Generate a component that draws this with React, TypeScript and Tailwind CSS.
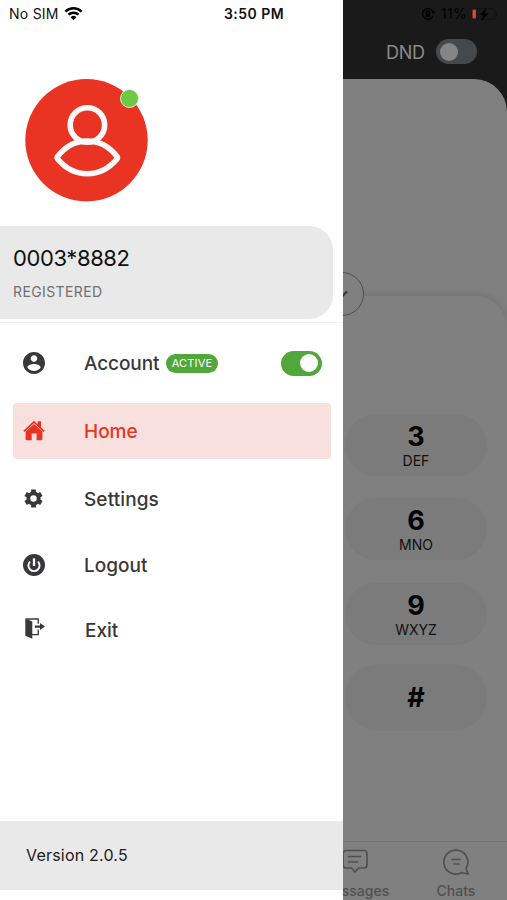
import type { ReactNode } from "react";

type MenuItem = {
  label: string;
  icon: ReactNode;
  rowClass: string;
  labelClass: string;
};

function WifiIcon() {
  return (
    <svg viewBox="0 0 20 16" className="ml-[5px] h-[15px] w-[19px]" fill="none" stroke="#000" strokeWidth="2.7">
      <path d="M1.4 5.9a12.2 12.2 0 0 1 17.2 0" />
      <path d="M4.6 9.3a7.7 7.7 0 0 1 10.8 0" />
      <path d="M10 15.2 6.9 11.9a4.4 4.4 0 0 1 6.2 0z" fill="#000" stroke="none" />
    </svg>
  );
}

function AvatarIcon() {
  return (
    <svg viewBox="0 0 123 123" className="size-[123px]" fill="none" stroke="#fafafa" strokeWidth="5.6">
      <circle cx="61.5" cy="61.2" r="61.2" fill="#e93323" stroke="none" />
      <circle cx="62.4" cy="46" r="17.2" />
      <path d="M32.6 77.4C40 68 50.5 62 62.3 62S84.5 68 92 77.4Q92.9 78.7 92 80C83.5 90 73.3 94.8 62.3 94.8S41 90 32.6 80Q31.7 78.7 32.6 77.4Z" strokeLinejoin="round" />
    </svg>
  );
}

function AccountIcon() {
  return (
    <svg viewBox="2 2 20 20" className="size-[22px]" fill="#38383a">
      <path d="M12 2C6.48 2 2 6.48 2 12s4.48 10 10 10 10-4.48 10-10S17.52 2 12 2zm0 3c1.66 0 3 1.34 3 3s-1.34 3-3 3-3-1.34-3-3 1.34-3 3-3zm0 14.2c-2.5 0-4.71-1.28-6-3.22.03-1.99 4-3.08 6-3.08 1.99 0 5.97 1.09 6 3.08-1.29 1.94-3.5 3.22-6 3.22z" />
    </svg>
  );
}

function HomeIcon() {
  return (
    <svg viewBox="0 0 22 21" className="mb-[2px] h-[21px] w-[22px]" fill="#e93323">
      <path d="M11 4 19.4 11.6V18.9a1.3 1.3 0 0 1-1.3 1.3h-4.5v-6.6H8.7v6.6H3.9A1.3 1.3 0 0 1 2.6 18.9v-7.3z" />
      <path d="M.9 11.3 11 1.9l10.1 9.4" fill="none" stroke="#e93323" strokeWidth="1.8" />
      <path d="M14.6 1.2h3.4v6.7l-3.4-3.1z" />
    </svg>
  );
}

function SettingsIcon() {
  return (
    <svg viewBox="0 0 20 20" className="mr-px size-[19px]" fill="none" stroke="#38383a">
      <circle cx="10" cy="10" r="5.4" strokeWidth="4" />
      <path
        d="M10 .4v3M10 16.6v3M1.69 5.2l2.6 1.5M15.71 13.3l2.6 1.5M1.69 14.8l2.6-1.5M15.71 6.7l2.6-1.5"
        strokeWidth="5"
      />
    </svg>
  );
}

function LogoutIcon() {
  return (
    <svg viewBox="0 0 22 22" className="size-[22px]" fill="none" stroke="#fff" strokeWidth="1.9">
      <circle cx="11" cy="11" r="11" fill="#38383a" stroke="none" />
      <path d="M7 7.6a5.6 5.6 0 1 0 8 0" />
      <path d="M11 4.4v7.6" strokeWidth="2.3" />
    </svg>
  );
}

function ExitIcon() {
  return (
    <svg viewBox="0 0 22 21" className="h-[21px] w-[22px]" fill="#38383a">
      <path d="M2.3.6 9.3 3.6v17.2L2.3 17.8z" />
      <path d="M2.9 1h12.3v4.7M15.2 11.4v5.2H9" fill="none" stroke="#38383a" strokeWidth="1.3" />
      <path d="M11.8 7.5h5.2V5.1l5 3.5-5 3.5V9.7h-5.2z" />
    </svg>
  );
}

const menu: MenuItem[] = [
  {
    label: "Home",
    icon: <HomeIcon />,
    rowClass: "mt-[11px] h-[56px] rounded-[4px] bg-[#f8e0df] text-[#e93323]",
    labelClass: "pt-[2px]",
  },
  { label: "Settings", icon: <SettingsIcon />, rowClass: "mt-[12px] h-[55px]", labelClass: "tracking-[0.1px] pt-[3px]" },
  { label: "Logout", icon: <LogoutIcon />, rowClass: "mt-[11px] h-[55px]", labelClass: "pt-[3px]" },
  { label: "Exit", icon: <ExitIcon />, rowClass: "mt-[9px] h-[55px]", labelClass: "pl-px pt-[5px]" },
];

const keys = [
  { digit: "3", letters: "DEF", className: "h-[62px]" },
  { digit: "6", letters: "MNO", className: "mt-[22px] h-[62px]" },
  { digit: "9", letters: "WXYZ", className: "mt-[23px] h-[62px]" },
  { digit: "#", letters: "", className: "mt-[19px] h-[67px] pb-[2px]" },
];

function Drawer() {
  return (
    <aside className="flex h-full w-[343px] shrink-0 flex-col bg-white text-[#38383a]">
      <div className="flex h-[26px] items-center pl-[9px] text-[#111]">
        <span className="w-[50px] whitespace-nowrap text-[14px] tracking-[0.25px]">No SIM</span>
        <WifiIcon />
        <span className="ml-[141px] whitespace-nowrap text-[14px] font-semibold tracking-[0.45px]">3:50 PM</span>
      </div>

      <div className="relative ml-[25px] mt-[53px] size-[123px]">
        <AvatarIcon />
        <span className="absolute left-[95px] top-[10px] size-[19px] rounded-full border border-[#e5f0d8] bg-[#6cc944]" />
      </div>

      <div className="mr-[10px] mt-[24px] flex h-[93px] flex-col rounded-r-[24px] bg-[#e9e9e9] pl-[13px] pt-[18px]">
        <span className="text-[22px] leading-[28px] tracking-[-0.4px] text-[#111]">0003*8882</span>
        <span className="mt-[9px] text-[14px] leading-[22px] tracking-[0.4px] text-[#707070]">REGISTERED</span>
      </div>
      <div className="mt-[3px] h-px bg-[#f2f2f2]" />

      <nav className="flex flex-col pl-[13px] pr-[12px] text-[19px] font-medium">
        <div className="mt-[11px] flex h-[58px] items-center">
          <span className="flex w-[71px] pl-[10px]">
            <AccountIcon />
          </span>
          <span className="w-[75px] whitespace-nowrap pt-[2px] tracking-[-0.1px]">Account</span>
          <span className="ml-[7px] flex h-[19px] w-[52px] items-center justify-center rounded-full bg-[#51a739] text-[11px] font-normal tracking-[0.2px] text-white">
            ACTIVE
          </span>
          <span className="ml-auto mr-[9px] flex h-[25px] w-[41px] items-center justify-end rounded-full bg-[#51a739] pr-[4px]">
            <span className="size-[18px] rounded-full bg-white" />
          </span>
        </div>
        {menu.map((item) => (
          <div key={item.label} className={`flex items-center ${item.rowClass}`}>
            <span className="flex w-[71px] shrink-0">
              <span className="flex w-[42px] justify-center">{item.icon}</span>
            </span>
            <span className={item.labelClass}>{item.label}</span>
          </div>
        ))}
      </nav>

      <footer className="mb-[10px] mt-auto flex h-[69px] items-center bg-[#e9e9e9] pb-[2px] pl-[26px] text-[16px] tracking-[0.2px] text-[#202020]">
        Version 2.0.5
      </footer>
    </aside>
  );
}

function Dialer() {
  return (
    <main className="flex h-full w-[164px] flex-col overflow-hidden bg-[#1a1a1a] text-black">
      <div className="flex h-[27px] shrink-0 items-center pl-[78px]">
        <svg viewBox="0 0 14 14" className="size-[14px]" fill="none" stroke="#000" strokeWidth="1.3">
          <path d="M12.2 5.4A5.4 5.4 0 1 0 12 9" />
          <path d="m10.4 6.2 3.3.6-.3-3.3z" fill="#000" stroke="none" />
          <rect x="4.7" y="6.4" width="4.4" height="3.4" fill="#000" stroke="none" />
          <path d="M5.5 6.5V5.3a1.4 1.4 0 0 1 2.8 0v1.2" />
        </svg>
        <span className="ml-[6px] w-[27px] whitespace-nowrap text-[14px] tracking-[0.3px]">11%</span>
        <svg viewBox="0 0 28 14" className="ml-[3px] h-[14px] w-[28px]" fill="none">
          <rect x="1" y="1.5" width="23" height="11" rx="3.5" stroke="#121212" />
          <path d="M25.5 5v4" stroke="#121212" />
          <rect x="1.5" y="2.6" width="3.4" height="9" rx="1" fill="#e4453a" />
          <path d="M15.5 1 8.2 8h4.2l-2 5.5L18 6.2h-4.4z" fill="#000" />
        </svg>
      </div>
      <div className="flex h-[52px] shrink-0 items-start pl-[43px] pt-[12px]">
        <span className="w-[40px] whitespace-nowrap text-[18px] leading-[27px] tracking-[-0.3px] text-[#8b8b8b]">DND</span>
        <span className="ml-[10px] flex h-[25px] w-[41px] items-center rounded-full bg-[#45494c] pl-[4px]">
          <span className="size-[18px] rounded-full bg-[#858585]" />
        </span>
      </div>

      <div className="flex min-h-0 flex-1 flex-col rounded-tr-[33px] bg-[#808080] pt-[217px]">
        <section className="relative flex min-h-0 flex-1 flex-col items-start rounded-tr-[32px] bg-[#808080] pl-[2px] pt-[118px] shadow-[0_-3px_4px_1px_#777777]">
          <div className="absolute -left-[23px] -top-[24px] flex size-[44px] items-center justify-center rounded-full border border-[#4c4c4c] bg-[#808080]">
            <svg viewBox="0 0 12 8" className="h-[8px] w-[12px]" fill="none" stroke="#333" strokeWidth="2">
              <path d="m1 1.5 5 5 5-5" />
            </svg>
          </div>
          {keys.map((key) => (
            <div
              key={key.digit}
              className={`flex w-[142px] shrink-0 flex-col items-center justify-center rounded-full bg-[#7b7b7b] ${key.className}`}
            >
              <span className="pt-[2px] text-[27px] font-bold leading-[28px]">{key.digit}</span>
              {key.letters && (
                <span className="-mb-[2px] text-[14px] leading-[20px] text-[#111]">{key.letters}</span>
              )}
            </div>
          ))}
          <div className="-ml-[2px] mt-auto flex h-[59px] w-[164px] border-t border-[#757575] text-[14px] font-medium text-[#505050]">
            <div className="-ml-[33px] flex w-[90px] shrink-0 flex-col items-center pt-[7px]">
              <svg viewBox="0 0 26 26" className="size-[26px] shrink-0" fill="none" stroke="#505050" strokeWidth="1.7" strokeLinecap="round" strokeLinejoin="round">
                <path d="M4 1.5h18a3 3 0 0 1 3 3V16a3 3 0 0 1-3 3h-5.5L13 23l-3.5-4H4a3 3 0 0 1-3-3V4.5a3 3 0 0 1 3-3z" />
                <path d="M6.5 7.5h12M6.5 13h9" />
              </svg>
              <span className="mt-[6px] leading-[20px]">Messages</span>
            </div>
            <div className="ml-[11px] flex w-[90px] shrink-0 flex-col items-center pt-[7px]">
              <svg viewBox="0 0 26 26" className="size-[26px] shrink-0" fill="none" stroke="#505050" strokeWidth="1.7" strokeLinecap="round" strokeLinejoin="round">
                <path d="M23 19.5A12 12 0 1 0 18.5 23.7L25.3 25z" />
                <path d="M9 10.5h8M11 15h5" />
              </svg>
              <span className="mt-[6px] leading-[20px]">Chats</span>
            </div>
          </div>
        </section>
      </div>
    </main>
  );
}

export default function App() {
  return (
    <div className="flex h-[900px] w-[507px] overflow-hidden font-['Inter','Liberation_Sans',sans-serif]">
      <Drawer />
      <Dialer />
    </div>
  );
}
